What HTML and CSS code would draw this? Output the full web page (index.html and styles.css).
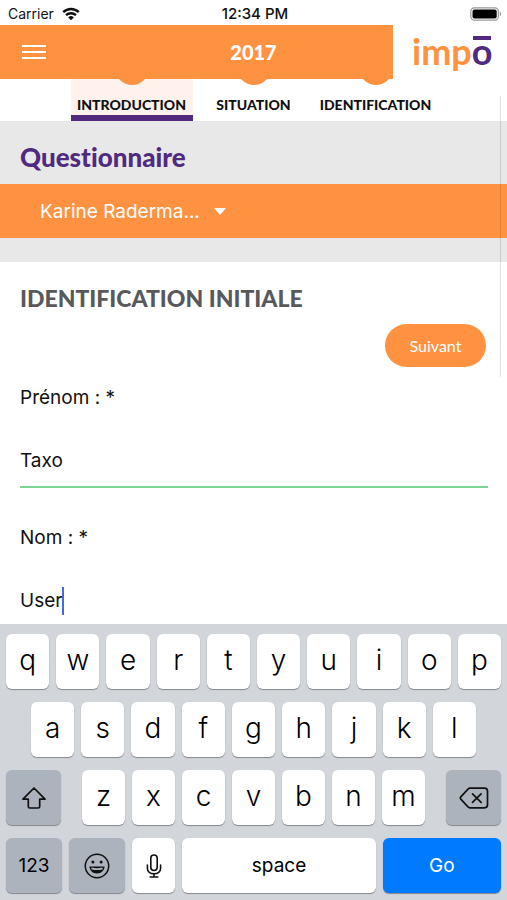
FILE: index.html
```html
<!DOCTYPE html>
<html lang="fr">
<head>
  <meta charset="UTF-8">
  <meta name="viewport" content="width=device-width, initial-scale=1.0">
  <title>Impō - Questionnaire 2017</title>
  <link rel="stylesheet" href="styles.css">
</head>
<body>

<div class="status-bar">
  <div class="carrier">
    <span>Carrier</span>
    <svg width="18" height="14" viewBox="0 0 18 14" fill="none" stroke="#111" stroke-width="2.4">
      <path d="M1.2 5.2a11.2 11.2 0 0 1 15.6 0"/>
      <path d="M4 8.2a7.2 7.2 0 0 1 10 0"/>
      <path d="M9 13.2L6.2 10.4a4 4 0 0 1 5.6 0z" fill="#111" stroke="none"/>
    </svg>
  </div>
  <span class="time">12:34 PM</span>
  <svg class="battery" width="32" height="14" viewBox="0 0 32 14">
    <rect x="0.8" y="0.8" width="27.6" height="12.4" rx="3.6" fill="#fff" stroke="#999" stroke-width="1.2"/>
    <rect x="2.5" y="2.5" width="24.2" height="9" rx="2" fill="#000"/>
    <path d="M29.8 4.8c1.8.6 1.8 3.8 0 4.4z" fill="#999"/>
  </svg>
</div>

<header class="header">
  <div class="title-bar">
    <button class="menu-button" aria-label="Menu">
      <svg width="24" height="16" viewBox="0 0 24 16" stroke="#fff" stroke-width="2">
        <path d="M0 2h24M0 8h24M0 14h24"/>
      </svg>
    </button>
    <h1 class="year">2017</h1>
  </div>
  <a class="logo" href="#">imp<span class="logo-o">o</span></a>
</header>

<nav class="tabs">
  <a class="tab active" href="#introduction">INTRODUCTION</a>
  <a class="tab" href="#situation">SITUATION</a>
  <a class="tab" href="#identification">IDENTIFICATION</a>
</nav>

<section class="banner">
  <h2 class="banner-title">Questionnaire</h2>
  <div class="person-bar">
    <select class="person" aria-label="Personne">
      <option>Karine Raderma...</option>
    </select>
    <svg class="arrow" width="12" height="7" viewBox="0 0 12 7"><path d="M0 0h12L6 7z" fill="#fff"/></svg>
  </div>
</section>

<main class="content">
  <h2 class="section-title">IDENTIFICATION INITIALE</h2>
  <button class="next-button">Suivant</button>
  <div class="field">
    <label for="prenom">Prénom : *</label>
    <div class="input-line">
      <input id="prenom" type="text" value="Taxo">
    </div>
  </div>
  <div class="field">
    <label for="nom">Nom : *</label>
    <div class="input-line">
      <input id="nom" type="text" value="User">
      <span class="caret"></span>
    </div>
  </div>
</main>

<div class="keyboard">
  <div class="key-row">
    <button class="key">q</button>
    <button class="key">w</button>
    <button class="key">e</button>
    <button class="key">r</button>
    <button class="key">t</button>
    <button class="key">y</button>
    <button class="key">u</button>
    <button class="key">i</button>
    <button class="key">o</button>
    <button class="key">p</button>
  </div>
  <div class="key-row middle">
    <button class="key">a</button>
    <button class="key">s</button>
    <button class="key">d</button>
    <button class="key">f</button>
    <button class="key">g</button>
    <button class="key">h</button>
    <button class="key">j</button>
    <button class="key">k</button>
    <button class="key">l</button>
  </div>
  <div class="key-row">
    <button class="key icon dark shift" aria-label="Shift">
      <svg width="26" height="24" viewBox="0 0 26 24" fill="none" stroke="#111" stroke-width="1.7" stroke-linejoin="round">
        <path d="M13 2L2 13.2h5.3v7.3q0 1.5 1.5 1.5h8.4q1.5 0 1.5-1.5v-7.3H24z"/>
      </svg>
    </button>
    <button class="key">z</button>
    <button class="key">x</button>
    <button class="key">c</button>
    <button class="key">v</button>
    <button class="key">b</button>
    <button class="key">n</button>
    <button class="key">m</button>
    <button class="key icon dark delete" aria-label="Delete">
      <svg width="30" height="22" viewBox="0 0 30 22" fill="none" stroke="#111" stroke-width="1.7" stroke-linejoin="round" stroke-linecap="round">
        <path d="M11 1.2h14.5q3 0 3 3v13.6q0 3-3 3H11q-1.2 0-2-1L1.8 12.2q-.9-1.2 0-2.4L9 2.2q.8-1 2-1z"/>
        <path d="M13.5 6.8l8.6 8.6M22.1 6.8l-8.6 8.6"/>
      </svg>
    </button>
  </div>
  <div class="key-row">
    <button class="key word dark numbers">123</button>
    <button class="key icon dark emoji" aria-label="Emoji">
      <svg width="26" height="26" viewBox="0 0 26 26" fill="none" stroke="#111" stroke-width="1.5">
        <circle cx="13" cy="13" r="11.7"/>
        <circle cx="8.9" cy="9" r="1.5" fill="#111" stroke="none"/>
        <circle cx="17.1" cy="9" r="1.5" fill="#111" stroke="none"/>
        <path d="M5.4 13.6h15.2c-.3 4.2-3.4 7-7.6 7s-7.3-2.8-7.6-7z" fill="#111" stroke="none"/>
        <path d="M7.4 15.4q5.6 1.6 11.2 0" stroke="#adb3bd" stroke-width="1.8"/>
      </svg>
    </button>
    <button class="key icon" aria-label="Dictation">
      <svg width="16" height="24" viewBox="0 0 16 24" fill="none" stroke="#111" stroke-width="1.6" stroke-linecap="round">
        <rect x="4.8" y="1" width="6.4" height="15.5" rx="3.2"/>
        <path d="M1.4 11v3.2c0 3.4 2.8 5.6 6.6 5.6s6.6-2.2 6.6-5.6V11M8 19.8v3M4.2 23h7.6"/>
      </svg>
    </button>
    <button class="key word space">space</button>
    <button class="key word go">Go</button>
  </div>
</div>

<div class="scroll-mark"></div>

</body>
</html>
```
FILE: styles.css
```css
* {
  box-sizing: border-box;
  margin: 0;
  padding: 0;
}

body {
  display: flex;
  flex-direction: column;
  height: 100vh;
  overflow: hidden;
  background-color: #fff;
  color: #111;
  font-family: Inter, sans-serif;
}

button, input, select {
  border: none;
  background: none;
  color: inherit;
  font-family: inherit;
}

a {
  color: inherit;
  text-decoration: none;
}

/* Status bar */
.status-bar {
  display: grid;
  grid-template-columns: 1fr auto 1fr;
  align-items: center;
  height: 25px;
  padding: 2px 5px 0 8px;
  font-size: 14px;
}

.carrier {
  display: flex;
  align-items: center;
  gap: 8px;
}

.time {
  font-size: 15px;
  font-weight: 500;
}

.battery {
  justify-self: end;
}

/* Header */
.header {
  display: flex;
  height: 54px;
}

.title-bar {
  display: flex;
  align-items: center;
  flex: 1;
  background-color: #ff9241;
  color: #fff;
}

.menu-button {
  display: flex;
  padding: 0 22px;
  cursor: pointer;
}

.year {
  flex: 1;
  padding-left: 46px;
  font-family: Lato, sans-serif;
  font-size: 20px;
  font-weight: 900;
  text-align: center;
}

.logo {
  width: 114px;
  padding-left: 19px;
  font-family: Lato, sans-serif;
  font-size: 36px;
  font-weight: 700;
  line-height: 52px;
  color: #ff9241;
}

.logo-o {
  position: relative;
  color: #4f2a80;
}

.logo-o::before {
  content: "";
  position: absolute;
  top: 7px;
  left: 1px;
  right: 1px;
  height: 4px;
  background-color: #4f2a80;
}

/* Tabs */
.tabs {
  display: flex;
  justify-content: center;
  height: 42px;
  overflow: hidden;
}

.tab {
  position: relative;
  width: 122px;
  padding-top: 16px;
  border-bottom: 6px solid transparent;
  font-family: Lato, sans-serif;
  font-size: 14px;
  font-weight: 900;
  line-height: 20px;
  text-align: center;
}

.tab::before {
  content: "";
  position: absolute;
  top: -28px;
  left: 44px;
  width: 34px;
  height: 34px;
  border-radius: 50%;
  background-color: #ff9241;
}

.tab.active {
  background-color: #fff2ec;
  border-bottom-color: #53297d;
}

/* Banner */
.banner {
  padding-bottom: 24px;
  background-color: #e8e8e8;
}

.banner-title {
  padding: 21px 20px 12px;
  font-family: Lato, sans-serif;
  font-size: 26px;
  font-variant-ligatures: none;
  font-weight: 900;
  line-height: 30px;
  color: #4f2a80;
}

.person-bar {
  display: flex;
  align-items: center;
  gap: 14px;
  height: 54px;
  padding-left: 40px;
  background-color: #ff9241;
  color: #fff;
}

.person {
  appearance: none;
  font-size: 19px;
}

/* Form */
.content {
  flex: 1;
  min-height: 0;
  padding: 20px 19px 0 20px;
  overflow: hidden;
}

.section-title {
  font-family: Lato, sans-serif;
  font-size: 23px;
  font-weight: 900;
  line-height: 32px;
  color: #58595b;
}

.next-button {
  display: block;
  width: 101px;
  height: 43px;
  margin: 10px 2px 19px auto;
  border-radius: 22px;
  background-color: #ff9241;
  color: #fff;
  font-family: Lato, sans-serif;
  font-size: 16px;
  cursor: pointer;
}

.field {
  margin-bottom: 38px;
}

.field label {
  display: block;
  font-size: 19px;
  line-height: 24px;
}

.input-line {
  display: flex;
  align-items: center;
  margin-top: 25px;
  border-bottom: 2px solid #7fd596;
}

.input-line input {
  field-sizing: content;
  height: 51px;
  font-size: 19px;
  outline: none;
}

.caret {
  width: 2px;
  height: 28px;
  background-color: #4169e8;
}

/* Keyboard */
.keyboard {
  display: flex;
  flex-direction: column;
  gap: 13px;
  padding: 10px 6px 7px;
  background-color: #d2d5da;
}

.key-row {
  display: flex;
  gap: 7px;
}

.key-row.middle {
  padding: 0 25px;
}

.key {
  display: flex;
  justify-content: center;
  align-items: center;
  flex: 43 1 0;
  min-width: 0;
  height: 55px;
  padding-bottom: 4px;
  border-radius: 6px;
  background-color: #fff;
  box-shadow: 0 1px 1px #85888d;
  color: #000;
  font-size: 28px;
  font-weight: 300;
  cursor: pointer;
}

.key.icon {
  padding-bottom: 0;
}

.key.dark {
  background-color: #adb3bd;
}

.key.word {
  padding-bottom: 1px;
  font-size: 19px;
  font-weight: 400;
}

.shift {
  flex-grow: 55;
  margin-right: 14px;
}

.delete {
  flex-grow: 55;
  margin-left: 14px;
}

.numbers, .emoji {
  flex-grow: 56;
}

.space {
  flex-grow: 193;
}

.key.go {
  flex-grow: 118;
  background-color: #007aff;
  color: #fff;
}

/* Thin scroll indicator on the right edge */
.scroll-mark {
  position: absolute;
  top: 96px;
  right: 6px;
  width: 1px;
  height: 281px;
  background-color: rgba(0, 0, 0, 0.12);
}
```
